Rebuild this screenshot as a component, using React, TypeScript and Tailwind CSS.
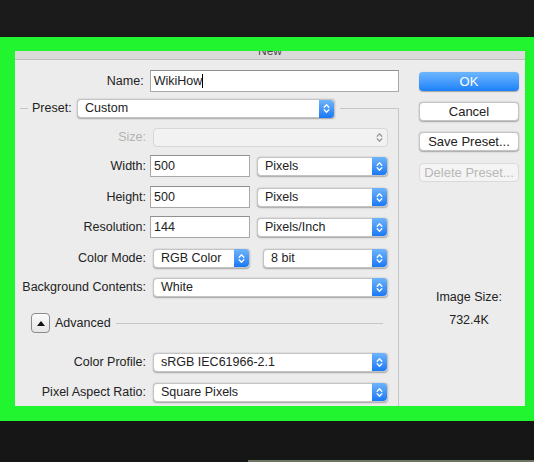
import React from 'react';

const Chevrons = ({ color = 'white' }: { color?: string }) => (
  <svg width="7" height="11" viewBox="0 0 7 11">
    <path d="M1.2 4.2 L3.5 1.8 L5.8 4.2 M1.2 6.8 L3.5 9.2 L5.8 6.8" stroke={color} strokeWidth="1.3" fill="none" strokeLinecap="round" strokeLinejoin="round" />
  </svg>
);

const Select = ({ value, width, disabled }: { value: string; width: string; disabled?: boolean }) => (
  <div
    className={`${width} h-[19px] flex items-center rounded-[4px] border-[0.5px] ${
      disabled ? 'bg-[#f2f2f2] border-[#d6d6d6]' : 'bg-white border-[#c4c4c4] shadow-[0_0.5px_1.5px_rgba(0,0,0,0.3)]'
    }`}
  >
    <span className="flex-1 pl-[7px] truncate">{value}</span>
    {disabled ? (
      <div className="w-[15px] h-full flex items-center justify-center">
        <Chevrons color="#9a9a9a" />
      </div>
    ) : (
      <div className="w-[15px] h-[calc(100%+1px)] flex items-center justify-center rounded-r-[4px] bg-gradient-to-b from-[#6db4fb] to-[#1778f5]">
        <Chevrons />
      </div>
    )}
  </div>
);

const Input = ({ value, width }: { value: string; width: string }) => (
  <div className={`${width} h-[22px] flex items-center bg-white border border-[#a8a8a8] border-t-[#8f8f8f] pl-[3px]`}>
    {value}
  </div>
);

const Row = ({ label, mt, disabled, children }: { label: string; mt: string; disabled?: boolean; children: React.ReactNode }) => (
  <div className={`flex items-center h-[22px] ${mt}`}>
    <span className={`w-[126px] text-right ${disabled ? 'text-[#b3b3b3]' : ''}`}>{label}</span>
    <div className="ml-[4px] flex items-center">{children}</div>
  </div>
);

const Button = ({ label, mt, primary, disabled }: { label: string; mt: string; primary?: boolean; disabled?: boolean }) => {
  const look = primary
    ? 'bg-gradient-to-b from-[#6cb6fd] to-[#1a80f9] text-white shadow-[0_0.5px_1px_rgba(0,0,0,0.3)]'
    : disabled
    ? 'bg-[#f4f4f4] text-[#b8b8b8] border-[0.5px] border-[#dadada]'
    : 'bg-white border-[0.5px] border-[#c4c4c4] shadow-[0_0.5px_1.5px_rgba(0,0,0,0.3)]';
  return <div className={`w-[100px] h-[19px] rounded-[4px] flex items-center justify-center text-[13px] ${look} ${mt}`}>{label}</div>;
};

export default function App() {
  return (
    <div className="h-[462px] w-[534px] bg-[#1b1b1b] flex flex-col font-['Liberation_Sans',Arial,sans-serif] text-[12.5px] leading-[15px] text-[#222]">
      <div className="h-[37px]" />
      <div className="bg-[#20f52f] pl-[15px] pr-[9px] pt-[14px] pb-[15px]">
        <div className="h-[355px] bg-[#ececec] flex flex-col">
          <div className="h-[8px] bg-[#dadada] overflow-hidden flex justify-center">
            <span className="text-[12px] leading-[12px] -mt-[6px] text-[#4a4a4a]">New</span>
          </div>
          <div className="h-px bg-[#bdbdbd]" />
          <div className="flex flex-1">
            {/* left side */}
            <div className="w-[384px] flex flex-col">
              <div className="flex items-center h-[22px] mt-[10px]">
                <span className="w-[129px] text-right">Name:</span>
                <div className="ml-[6px] w-[250px] h-[22px] flex items-center bg-white border border-[#a8a8a8] border-t-[#8f8f8f] pl-[3px]">
                  WikiHow<span className="w-px h-[14px] bg-black" />
                </div>
              </div>
              <fieldset className="ml-[5px] mt-[7px] flex-1 border-t border-r border-[#c6c6c6] min-w-0">
                <legend className="ml-[8px] pl-[4px] pr-[5px]">
                  <div className="flex items-center">
                    <span className="w-[41px]">Preset:</span>
                    <div className="ml-[4px]">
                      <Select value="Custom" width="w-[258px]" />
                    </div>
                  </div>
                </legend>
                <Row label="Size:" mt="mt-[8px]" disabled>
                  <div className="ml-[3px]">
                    <Select value="" width="w-[235px]" disabled />
                  </div>
                </Row>
                <Row label="Width:" mt="mt-[7px]">
                  <Input value="500" width="w-[100px]" />
                  <div className="ml-[7px]"><Select value="Pixels" width="w-[131px]" /></div>
                </Row>
                <Row label="Height:" mt="mt-[9px]">
                  <Input value="500" width="w-[100px]" />
                  <div className="ml-[7px]"><Select value="Pixels" width="w-[131px]" /></div>
                </Row>
                <Row label="Resolution:" mt="mt-[8px]">
                  <Input value="144" width="w-[100px]" />
                  <div className="ml-[7px]"><Select value="Pixels/Inch" width="w-[131px]" /></div>
                </Row>
                <Row label="Color Mode:" mt="mt-[9px]">
                  <div className="ml-[3px]"><Select value="RGB Color" width="w-[97px]" /></div>
                  <div className="ml-[13px]"><Select value="8 bit" width="w-[125px]" /></div>
                </Row>
                <Row label="Background Contents:" mt="mt-[7px]">
                  <div className="ml-[3px]"><Select value="White" width="w-[235px]" /></div>
                </Row>
                <div className="flex items-center h-[22px] mt-[14px] pl-[11px] pr-[15px]">
                  <div className="w-[19px] h-[20px] rounded-[4px] border border-[#8c8c8c] bg-gradient-to-b from-[#fbfbfb] to-[#e6e6e6] flex items-center justify-center">
                    <svg width="8" height="5" viewBox="0 0 8 5">
                      <path d="M0 5 L4 0 L8 5 Z" fill="#111" />
                    </svg>
                  </div>
                  <span className="ml-[5px]">Advanced</span>
                  <div className="ml-[5px] flex-1 h-px bg-[#c6c6c6]" />
                </div>
                <Row label="Color Profile:" mt="mt-[17px]">
                  <div className="ml-[3px]"><Select value="sRGB IEC61966-2.1" width="w-[235px]" /></div>
                </Row>
                <Row label="Pixel Aspect Ratio:" mt="mt-[8px]">
                  <div className="ml-[3px]"><Select value="Square Pixels" width="w-[235px]" /></div>
                </Row>
              </fieldset>
            </div>
            {/* right side */}
            <div className="flex-1 pl-[20px] flex flex-col">
              <Button label="OK" mt="mt-[12px]" primary />
              <Button label="Cancel" mt="mt-[11px]" />
              <Button label="Save Preset..." mt="mt-[11px]" />
              <Button label="Delete Preset..." mt="mt-[12px]" disabled />
              <div className="w-[100px] mt-[108px] text-center">Image Size:</div>
              <div className="w-[100px] mt-[8px] text-center">732.4K</div>
            </div>
          </div>
        </div>
      </div>
      <div className="flex-1 bg-[#161616] flex flex-col justify-end">
        <div className="h-[2px] ml-[248px] bg-[#6b7763]" />
      </div>
    </div>
  );
}
